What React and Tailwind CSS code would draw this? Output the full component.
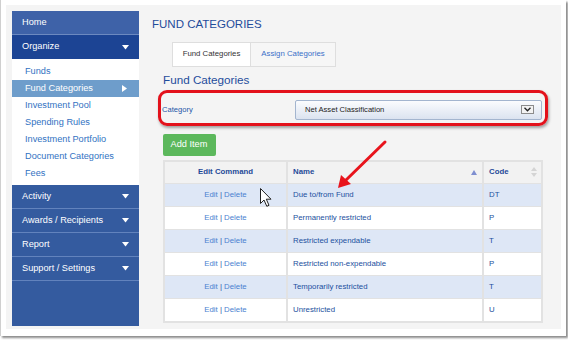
import React from 'react';

const sections = ['Activity', 'Awards / Recipients', 'Report', 'Support / Settings'];

const subItems = [
  'Funds',
  'Fund Categories',
  'Investment Pool',
  'Spending Rules',
  'Investment Portfolio',
  'Document Categories',
  'Fees'
];

const rows = [
  { name: 'Due to/from Fund', code: 'DT' },
  { name: 'Permanently restricted', code: 'P' },
  { name: 'Restricted expendable', code: 'T' },
  { name: 'Restricted non-expendable', code: 'P' },
  { name: 'Temporarily restricted', code: 'T' },
  { name: 'Unrestricted', code: 'U' }
];

const Caret = () => (
  <svg width="7" height="5" viewBox="0 0 7 5" className="shrink-0">
    <path d="M0 0 L7 0 L3.5 4.5 Z" fill="#ffffff" />
  </svg>
);

const Sidebar = () => (
  <div className="w-[127px] mt-[6px] ml-[6px] mb-[3px] bg-[#345b9f] flex flex-col text-[9.2px] text-white">
    <div className="h-[24px] flex items-center pl-[10px] bg-[#3e62a8] border-b border-[#6c89c0]">
      Home
    </div>
    <div className="h-[24px] flex items-center justify-between pl-[10px] pr-[10px] bg-[#1c4494]">
      <span>Organize</span>
      <Caret />
    </div>
    <div className="bg-white pt-[4px] pb-[3px]">
      {subItems.map(item =>
        item === 'Fund Categories' ? (
          <div key={item} className="h-[17px] flex items-center justify-between pl-[13px] pr-[12px] bg-[#6e9dcb] text-white">
            <span>{item}</span>
            <svg width="5" height="7" viewBox="0 0 5 7">
              <path d="M0 0 L5 3.5 L0 7 Z" fill="#ffffff" />
            </svg>
          </div>
        ) : (
          <div key={item} className="h-[17px] flex items-center pl-[13px] text-[#3272c2]">
            {item}
          </div>
        )
      )}
    </div>
    {sections.map(s => (
      <div key={s} className="h-[24px] flex items-center justify-between pl-[10px] pr-[10px] border-b border-[#6283bd]">
        <span>{s}</span>
        <Caret />
      </div>
    ))}
  </div>
);

const Table = () => (
  <table className="ml-[11px] mt-[4px] w-[378px] border-collapse border-2 border-[#e2e2e2] text-[7.8px] table-fixed">
    <colgroup>
      <col className="w-[123px]" />
      <col className="w-[196px]" />
      <col className="w-[59px]" />
    </colgroup>
    <thead>
      <tr className="h-[23px] bg-[#f2f2f2] text-[#1f4a98] font-bold">
        <th className="border-x-2 border-y border-[#e2e2e2] text-center">Edit Command</th>
        <th className="border-x-2 border-y border-[#e2e2e2] text-left pl-[5px]">
          <div className="flex items-center justify-between pr-[5px]">
            <span>Name</span>
            <svg width="6" height="5" viewBox="0 0 6 5">
              <path d="M0 5 L6 5 L3 0 Z" fill="#7f8fd0" />
            </svg>
          </div>
        </th>
        <th className="border-x-2 border-y border-[#e2e2e2] text-left pl-[5px]">
          <div className="flex items-center justify-between pr-[4px]">
            <span>Code</span>
            <svg width="6" height="10" viewBox="0 0 6 10">
              <path d="M0 4 L6 4 L3 0 Z" fill="#d4d4d4" />
              <path d="M0 6 L6 6 L3 10 Z" fill="#d4d4d4" />
            </svg>
          </div>
        </th>
      </tr>
    </thead>
    <tbody>
      {rows.map((r, i) => (
        <tr key={r.name} className={`h-[23px] ${i % 2 === 0 ? 'bg-[#dee7f6]' : 'bg-white'}`}>
          <td className="border-x-2 border-y border-[#e2e2e2] text-center text-[#4a7fd0]">
            Edit <span className="text-[#2d5aa6]">|</span> Delete
          </td>
          <td className="border-x-2 border-y border-[#e2e2e2] pl-[5px] text-[#22509e]">{r.name}</td>
          <td className="border-x-2 border-y border-[#e2e2e2] pl-[5px] text-[#22509e]">{r.code}</td>
        </tr>
      ))}
    </tbody>
  </table>
);

const App = () => {
  return (
    <div className="w-[568px] h-[340px] bg-white" style={{ fontFamily: '"Liberation Sans", Arial, sans-serif' }}>
      <div className="relative w-[566px] h-[336px] bg-white border-l border-[#cfcfcf] shadow-[2px_2px_2px_rgba(0,0,0,0.45)] pt-[5px] pl-[5px] pr-[5px] pb-[7px]">
        <div className="flex h-full bg-[#f4f4f4]">
          <Sidebar />

          <div className="flex-1 pl-[13px] pt-[11.5px]">
            <h1 className="text-[11.5px] leading-[14px] text-[#1f4c9b]">FUND CATEGORIES</h1>

            <div className="flex ml-[20px] mt-[11px] text-[7.8px]">
              <div className="w-[79px] h-[25px] flex items-center justify-center bg-white border border-[#dedede] text-[#333333]">
                Fund Categories
              </div>
              <div className="w-[85px] h-[25px] flex items-center justify-center bg-[#f6f6f6] border border-l-0 border-[#dedede] text-[#3a70c8]">
                Assign Categories
              </div>
            </div>

            <h2 className="ml-[11px] mt-[6px] text-[11.7px] leading-[14px] text-[#1f4d9c]">Fund Categories</h2>

            <div className="ml-[6px] mt-[3px] w-[390px] h-[36px] border-[3px] border-[#e3111b] rounded-[9px] shadow-[1px_2px_3px_rgba(0,0,0,0.35)] flex items-center pt-[4px] pl-[1px]">
              <div className="w-[133px] text-[7.6px] text-[#2457a8]">Category</div>
              <div className="w-[247px] h-[20px] rounded-[2px] border border-[#a3b5cf] bg-gradient-to-b from-[#fbfcfe] to-[#dbe3f0] flex items-center justify-between pl-[9px] pr-[7px]">
                <span className="text-[7.6px] text-[#222222]">Net Asset Classification</span>
                <div className="w-[13px] h-[9px] border border-[#8c8c8c] bg-[#f3f3f3] flex items-center justify-center">
                  <svg width="7" height="5" viewBox="0 0 7 5">
                    <path d="M0.5 0.8 L3.5 3.8 L6.5 0.8" stroke="#222222" strokeWidth="1.3" fill="none" />
                  </svg>
                </div>
              </div>
            </div>

            <button className="ml-[10.5px] mt-[8px] w-[53px] h-[22px] rounded-[2px] bg-[#5cb85c] text-white text-[9.2px] flex items-center justify-center">
              Add Item
            </button>

            <Table />
          </div>
        </div>

        {/* red annotation arrow */}
        <svg className="absolute left-0 top-0 pointer-events-none" width="568" height="340">
          <line x1="384" y1="142" x2="344" y2="181" stroke="#e8141c" strokeWidth="3" strokeLinecap="round" />
          <path d="M337 188 L340 175 L350 184 Z" fill="#e8141c" />
        </svg>

        {/* mouse cursor */}
        <svg className="absolute left-[259px] top-[188px] pointer-events-none" width="13" height="20" viewBox="0 0 13 20">
          <path d="M0.5 0.5 L0.5 15.5 L4 12 L6.8 18.3 L9 17.3 L6.3 11.2 L11 11.2 Z" fill="#ffffff" stroke="#222222" strokeWidth="1" strokeLinejoin="round" />
        </svg>
      </div>
    </div>
  );
};

export default App;
